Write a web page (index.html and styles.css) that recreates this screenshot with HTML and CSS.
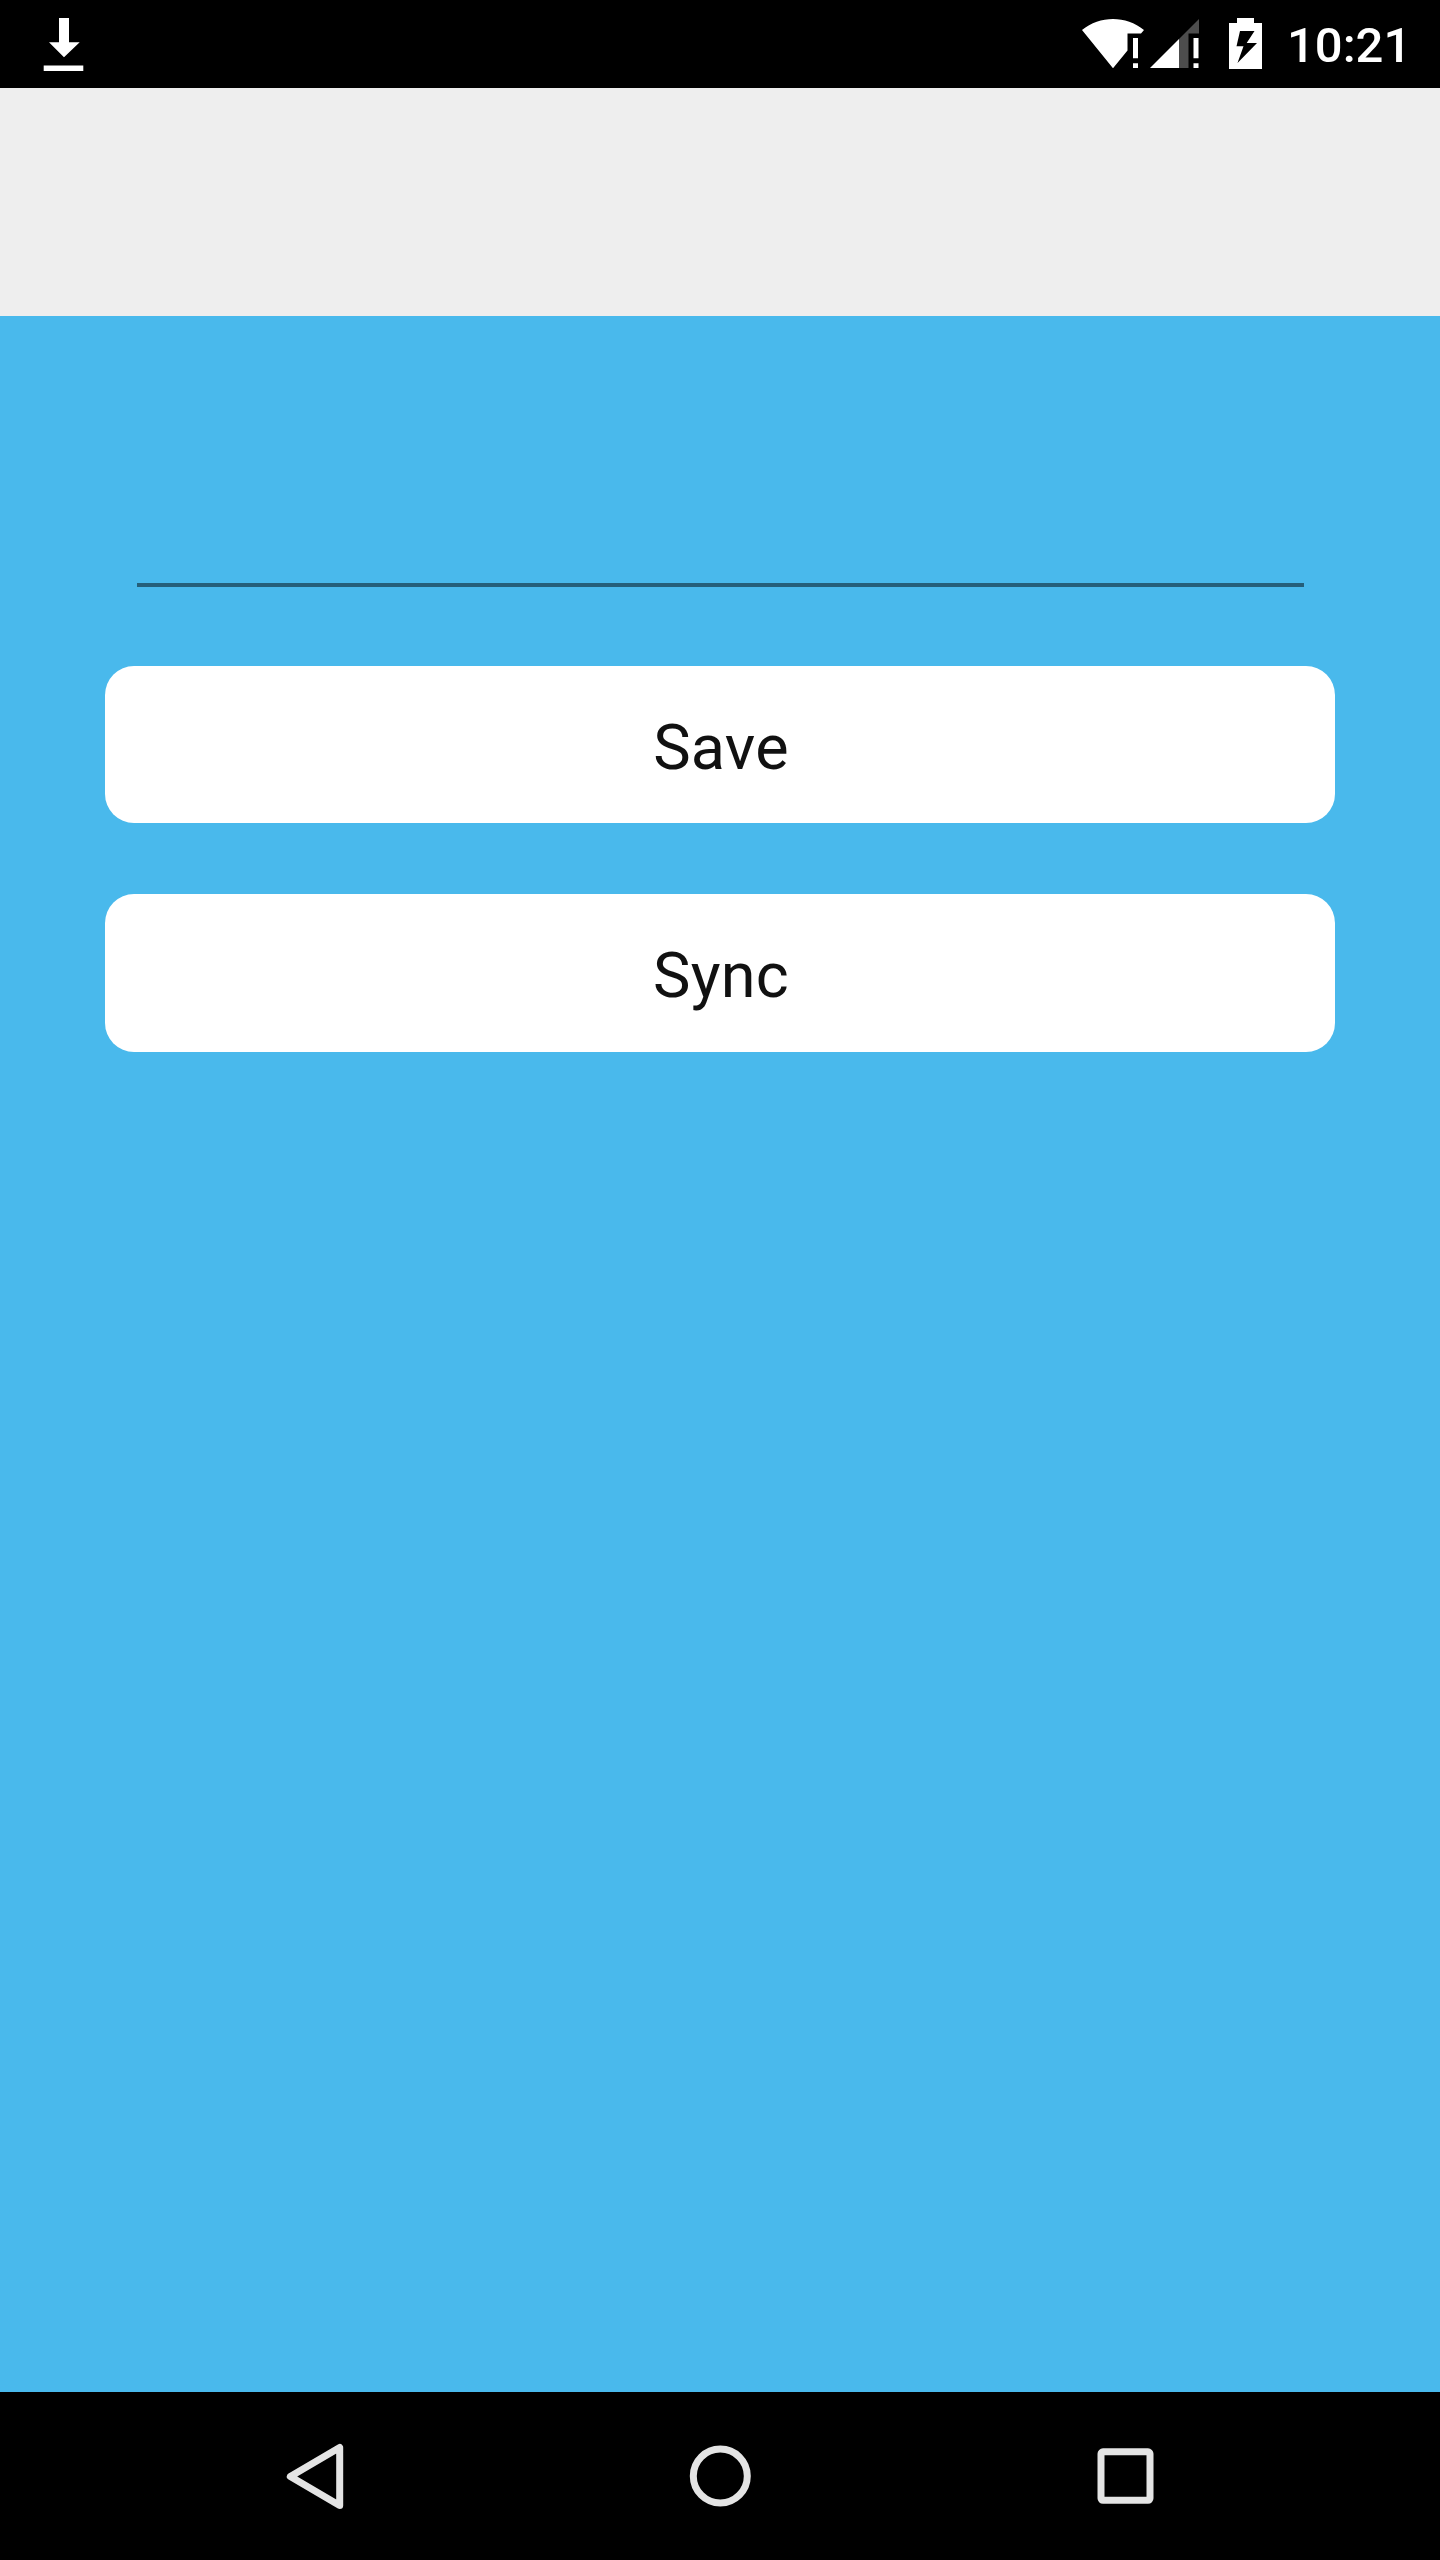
FILE: index.html
```html
<!DOCTYPE html>
<html lang="en">
<head>
<meta charset="utf-8">
<title>Save and Sync</title>
<link rel="stylesheet" href="styles.css">
</head>
<body>
<header class="status-bar">
  <svg class="download" width="120" height="88" viewBox="0 0 120 88">
    <path fill="#fff" d="M59 18H69V42.3H79.7L64 57.3L49 42.3H59ZM43.7 65.5H83.3V71H43.7Z"/>
  </svg>
  <div class="status-right">
    <svg width="200" height="88" viewBox="1070 0 200 88">
      <path fill="#fff" d="M1082 30C1100 15.4 1126 15.4 1144 30L1141 33.5H1127.5V50.5L1113 68.3ZM1133 38H1138V58.3H1133ZM1133 63.3H1138V68H1133Z"/>
      <path fill="#4d4d4d" d="M1179 39L1199 19V33.5H1188.5V68H1179Z"/>
      <path fill="#fff" d="M1150 68L1179 39V68ZM1193.5 38H1198.5V58.3H1193.5ZM1193.5 63.3H1198.5V68H1193.5Z"/>
      <path fill="#fff" fill-rule="evenodd" d="M1237 18H1254V23H1262V69H1229V23H1237ZM1240 31L1236.5 46.3H1243.5L1237.5 63L1257 43H1246.7L1254.5 31Z"/>
    </svg>
    <span class="clock">10:21</span>
  </div>
</header>
<div class="toolbar"></div>
<main class="content">
  <input class="field" type="text" aria-label="Value">
  <button class="button">Save</button>
  <button class="button sync">Sync</button>
</main>
<nav class="nav-bar">
  <svg width="68" height="72" viewBox="282 2440 68 72">
    <path fill="none" stroke="#e4e4e4" stroke-width="7" stroke-linejoin="round" d="M290.3 2476.5L339.7 2447.5V2505.5Z"/>
  </svg>
  <svg width="68" height="72" viewBox="686 2440 68 72">
    <circle cx="720.3" cy="2476" r="27" fill="none" stroke="#e4e4e4" stroke-width="7"/>
  </svg>
  <svg width="68" height="72" viewBox="1090 2440 68 72">
    <rect x="1101" y="2451.8" width="49" height="48.5" rx="2" fill="none" stroke="#e4e4e4" stroke-width="7"/>
  </svg>
</nav>
</body>
</html>
```
FILE: styles.css
```css
* {
  box-sizing: border-box;
}

body {
  margin: 0;
  height: 2560px;
  display: flex;
  flex-direction: column;
  font-family: Roboto, "Noto Sans", sans-serif;
  background: #49b9ec;
}

svg {
  display: block;
  flex: none;
}

.status-bar {
  height: 88px;
  display: flex;
  justify-content: space-between;
  background: #000;
}

.status-right {
  display: flex;
  width: 370px;
}

.clock {
  padding-left: 17px;
  color: #fff;
  font-size: 49px;
  font-weight: 500;
  line-height: 92px;
}

.toolbar {
  height: 228px;
  background: #eee;
}

.content {
  flex: 1;
  display: flex;
  flex-direction: column;
  padding: 140px 105px 0;
}

.field {
  height: 131px;
  margin: 0 31px 79px 32px;
  padding: 0 0 20px;
  border: 0;
  border-bottom: 4px solid #255f7a;
  outline: 0;
  background: transparent;
  font: 400 63px Roboto, sans-serif;
}

.button {
  height: 157px;
  margin-bottom: 71px;
  padding: 5px 0 0 2px;
  border: 0;
  border-radius: 29px;
  background: #fff;
  color: #111;
  font: 400 63px Roboto, sans-serif;
  letter-spacing: 0.2px;
}

.sync {
  height: 158px;
}

.nav-bar {
  height: 168px;
  display: flex;
  justify-content: space-between;
  align-items: center;
  padding: 0 282px;
  background: #000;
}
```
